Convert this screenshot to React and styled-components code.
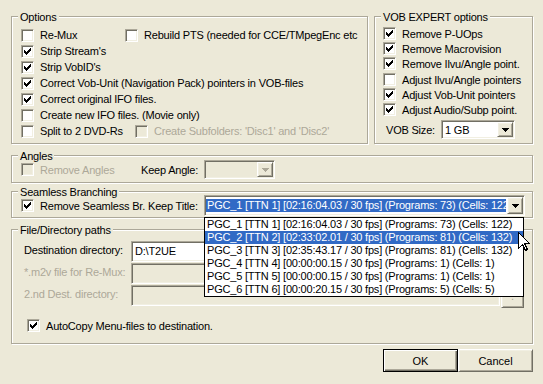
import React from 'react'
import styled, { createGlobalStyle } from 'styled-components'

const GlobalStyle = createGlobalStyle`
  html, body {
    margin: 0;
    padding: 0;
    background: #ece9d8;
  }
  body {
    font-family: "Liberation Sans", Arial, sans-serif;
    font-size: 11px;
    letter-spacing: -0.2px;
    color: #000;
  }
`

const FACE = '#ece9d8'
const GRAY = '#aca899'
const HILITE = '#316ac5'

const Dialog = styled.div`
  position: relative;
  width: 543px;
  height: 384px;
  box-sizing: border-box;
  padding: 16px 10px 0 11px;
  background: ${FACE};
  display: flex;
  flex-direction: column;
  overflow: hidden;
`

const TopRow = styled.div`
  display: flex;
  gap: 6px;
`

const Group = styled.div`
  box-sizing: border-box;
  border: 1px solid ${GRAY};
  box-shadow: inset 1px 1px #fff, 1px 1px #fff;
  display: flex;
  flex-direction: column;
  width: ${({ $w }) => ($w ? `${$w}px` : 'auto')};
  margin-top: ${({ $mt }) => $mt || 0}px;
  flex: none;
`

const Caption = styled.div`
  align-self: flex-start;
  height: 12px;
  line-height: 12px;
  margin: -6px 0 0 6px;
  padding: 0 2px;
  background: ${FACE};
`

const Body = styled.div`
  display: flex;
  flex-direction: column;
  padding: ${({ $p }) => $p};
`

const Row = styled.div`
  display: flex;
  align-items: center;
  height: ${({ $h }) => $h}px;
  margin-top: ${({ $mt }) => $mt || 0}px;
  flex: none;
`

const CheckLabel = styled.label`
  display: flex;
  align-items: center;
  gap: 6px;
  white-space: nowrap;
  width: ${({ $w }) => ($w ? `${$w}px` : 'auto')};
  margin-left: ${({ $ml }) => $ml || 0}px;
  color: ${({ $disabled }) => ($disabled ? GRAY : '#000')};
  flex: none;
`

const Box = styled.span`
  display: block;
  box-sizing: border-box;
  width: 13px;
  height: 13px;
  flex: none;
  background: ${({ $disabled }) => ($disabled ? FACE : '#fff')};
  border: 1px solid;
  border-color: ${GRAY} #fff #fff ${GRAY};
  box-shadow: inset 1px 1px #716f64, inset -1px -1px #f1efe2;
  svg { display: block; }
`

const Tick = ({ color }) => (
  <svg width="11" height="11" viewBox="0 0 11 11" shapeRendering="crispEdges">
    {[4, 5, 6, 5, 4, 3, 2].map((y, i) => (
      <rect key={i} x={i + 2} y={y} width="1" height="3" fill={color} />
    ))}
  </svg>
)

const Check = ({ checked, disabled, width, ml, children }) => (
  <CheckLabel $w={width} $ml={ml} $disabled={disabled}>
    <Box $disabled={disabled}>{checked && <Tick color={disabled ? GRAY : '#000'} />}</Box>
    <span>{children}</span>
  </CheckLabel>
)

const Label = styled.span`
  width: ${({ $w }) => $w}px;
  flex: none;
  white-space: nowrap;
  color: ${({ $disabled }) => ($disabled ? GRAY : '#000')};
  margin-left: ${({ $ml }) => $ml || 0}px;
  padding-bottom: ${({ $pb }) => $pb || 0}px;
`

const Sunken = styled.div`
  box-sizing: border-box;
  border: 1px solid;
  border-color: ${GRAY} #fff #fff ${GRAY};
  box-shadow: inset 1px 1px #716f64, inset -1px -1px #f1efe2;
  background: ${({ $disabled }) => ($disabled ? FACE : '#fff')};
`

const ComboBox = styled(Sunken)`
  position: relative;
  width: ${({ $w }) => $w}px;
  height: ${({ $h }) => $h}px;
  padding: 1px;
  display: flex;
  flex: none;
`

const ComboValue = styled.div`
  flex: 1;
  display: flex;
  align-items: center;
  padding-left: ${({ $pl }) => $pl || 0}px;
  overflow: hidden;
  white-space: nowrap;
  min-width: 0;
`

const Selection = styled.div`
  flex: 1;
  height: 13px;
  line-height: 13px;
  margin-right: 1px;
  padding-left: 1px;
  background: ${HILITE};
  color: #fff;
  overflow: hidden;
  white-space: nowrap;
`

const Raised = styled.div`
  box-sizing: border-box;
  background: ${FACE};
  border: 1px solid;
  border-color: #fff #716f64 #716f64 #fff;
  box-shadow: inset 1px 1px #f1efe2, inset -1px -1px ${GRAY};
`

const ArrowButton = styled(Raised)`
  width: 16px;
  flex: none;
  display: flex;
  align-items: center;
  justify-content: center;
  svg { display: block; }
`

const Tri = ({ color }) => (
  <svg width="7" height="4" viewBox="0 0 7 4" shapeRendering="crispEdges">
    {[7, 5, 3, 1].map((w, i) => (
      <rect key={i} x={(7 - w) / 2} y={i} width={w} height="1" fill={color} />
    ))}
  </svg>
)

const Combo = ({ w, h, disabled, pl, children, popup }) => (
  <ComboBox $w={w} $h={h} $disabled={disabled}>
    <ComboValue $pl={pl}>{children}</ComboValue>
    <ArrowButton>
      <Tri color={disabled ? GRAY : '#000'} />
    </ArrowButton>
    {popup}
  </ComboBox>
)

const ListPopup = styled.div`
  position: absolute;
  top: calc(100% + 2px);
  left: -1px;
  width: 320px;
  box-sizing: border-box;
  border: 1px solid #000;
  background: #fff;
  z-index: 5;
`

const ListItem = styled.div`
  height: 13px;
  line-height: 13px;
  padding-left: 2px;
  white-space: nowrap;
  overflow: hidden;
  background: ${({ $selected }) => ($selected ? HILITE : 'transparent')};
  color: ${({ $selected }) => ($selected ? '#fff' : '#000')};
`

const TextBox = styled(Sunken)`
  width: 369px;
  height: 21px;
  flex: none;
  padding: 0 0 2px 3px;
  display: flex;
  align-items: center;
  white-space: nowrap;
`

const Browse = styled(Raised)`
  width: 23px;
  height: 24px;
  margin: -1px 0 0 1px;
  align-self: flex-start;
  flex: none;
  display: flex;
  align-items: center;
  justify-content: center;
  color: ${GRAY};
`

const ButtonRow = styled.div`
  display: flex;
  justify-content: flex-end;
  margin-top: 5px;
`

const PushButton = styled.button`
  width: 75px;
  height: 23px;
  box-sizing: border-box;
  padding: 0;
  font: inherit;
  color: #000;
  background: ${FACE};
  border: 1px solid;
  border-color: ${({ $default }) => ($default ? '#000' : '#fff #716f64 #716f64 #fff')};
  box-shadow: ${({ $default }) =>
    $default
      ? `inset 1px 1px #fff, inset -1px -1px #716f64, inset -2px -2px ${GRAY}`
      : `inset 1px 1px #f1efe2, inset -1px -1px ${GRAY}`};
`

const Cursor = styled.svg`
  position: absolute;
  left: 518px;
  top: 232px;
  z-index: 10;
`

const titles = [
  'PGC_1 [TTN 1] [02:16:04.03 / 30 fps] (Programs: 73) (Cells: 122)',
  'PGC_2 [TTN 2] [02:33:02.01 / 30 fps] (Programs: 81) (Cells: 132)',
  'PGC_3 [TTN 3] [02:35:43.17 / 30 fps] (Programs: 81) (Cells: 132)',
  'PGC_4 [TTN 4] [00:00:00.15 / 30 fps] (Programs: 1) (Cells: 1)',
  'PGC_5 [TTN 5] [00:00:00.15 / 30 fps] (Programs: 1) (Cells: 1)',
  'PGC_6 [TTN 6] [00:00:20.15 / 30 fps] (Programs: 5) (Cells: 5)',
]

export default function App() {
  return (
    <Dialog>
      <GlobalStyle />
      <TopRow>
        <Group $w={357}>
          <Caption>Options</Caption>
          <Body $p="4px 0 4px 9px">
            <Row $h={16}>
              <Check width={104}>Re-Mux</Check>
              <Check>Rebuild PTS (needed for CCE/TMpegEnc etc</Check>
            </Row>
            <Row $h={16}><Check checked>Strip Stream's</Check></Row>
            <Row $h={16}><Check checked>Strip VobID's</Check></Row>
            <Row $h={16}><Check checked>Correct Vob-Unit (Navigation Pack) pointers in VOB-files</Check></Row>
            <Row $h={16}><Check checked>Correct original IFO files.</Check></Row>
            <Row $h={16}><Check>Create new IFO files. (Movie only)</Check></Row>
            <Row $h={16}>
              <Check width={114}>Split to 2 DVD-Rs</Check>
              <Check disabled>Create Subfolders: 'Disc1' and 'Disc2'</Check>
            </Row>
          </Body>
        </Group>
        <Group $w={159}>
          <Caption>VOB EXPERT options</Caption>
          <Body $p="3px 0 4px 8px">
            <Row $h={15}><Check checked>Remove P-UOps</Check></Row>
            <Row $h={15}><Check checked>Remove Macrovision</Check></Row>
            <Row $h={15}><Check checked>Remove Ilvu/Angle point.</Check></Row>
            <Row $h={15} $mt={1}><Check>Adjust Ilvu/Angle pointers</Check></Row>
            <Row $h={15}><Check checked>Adjust Vob-Unit pointers</Check></Row>
            <Row $h={15}><Check checked>Adjust Audio/Subp point.</Check></Row>
            <Row $h={19} $mt={3}>
              <Label $w={55} $ml={3}>VOB Size:</Label>
              <Combo w={74} h={19} pl={2}>1 GB</Combo>
            </Row>
          </Body>
        </Group>
      </TopRow>

      <Group $mt={11}>
        <Caption>Angles</Caption>
        <Body $p="0 0 3px 9px">
          <Row $h={19} $mt={-2}>
            <Check disabled width={120}>Remove Angles</Check>
            <Label $w={63}>Keep Angle:</Label>
            <Combo w={71} h={19} disabled />
          </Row>
        </Body>
      </Group>

      <Group $mt={8}>
        <Caption>Seamless Branching</Caption>
        <Body $p="0 0 1px 9px">
          <Row $h={21} $mt={-3}>
            <Check checked width={127}>Remove Seamless Br.</Check>
            <Label $w={56}>Keep Title:</Label>
            <Combo
              w={321}
              h={21}
              popup={
                <ListPopup>
                  {titles.map((t, i) => (
                    <ListItem key={t} $selected={i === 1}>{t}</ListItem>
                  ))}
                </ListPopup>
              }
            >
              <Selection>{titles[0]}</Selection>
            </Combo>
          </Row>
        </Body>
      </Group>

      <Group $mt={11}>
        <Caption>File/Directory paths</Caption>
        <Body $p="5px 0 11px 12px">
          <Row $h={21}>
            <Label $w={107} $pb={3}>Destination directory:</Label>
            <TextBox>D:\T2UE</TextBox>
            <Browse>...</Browse>
          </Row>
          <Row $h={21} $mt={1}>
            <Label $w={107} $pb={3} $disabled>*.m2v file for Re-Mux:</Label>
            <TextBox $disabled />
            <Browse>.</Browse>
          </Row>
          <Row $h={21} $mt={1}>
            <Label $w={107} $pb={3} $disabled>2.nd Dest. directory:</Label>
            <TextBox $disabled />
            <Browse>.</Browse>
          </Row>
          <Row $h={13} $mt={13}>
            <Check checked ml={3}>AutoCopy Menu-files to destination.</Check>
          </Row>
        </Body>
      </Group>

      <ButtonRow>
        <PushButton $default>OK</PushButton>
        <PushButton>Cancel</PushButton>
      </ButtonRow>

      <Cursor width="12" height="20" viewBox="0 0 12 20" shapeRendering="crispEdges">
        <path d="M0.5 0.5 V16.5 L4.5 12.5 L7.5 18.5 L9.5 17.5 L6.5 11.5 H11.5 Z" fill="#fff" stroke="#000" />
      </Cursor>
    </Dialog>
  )
}
